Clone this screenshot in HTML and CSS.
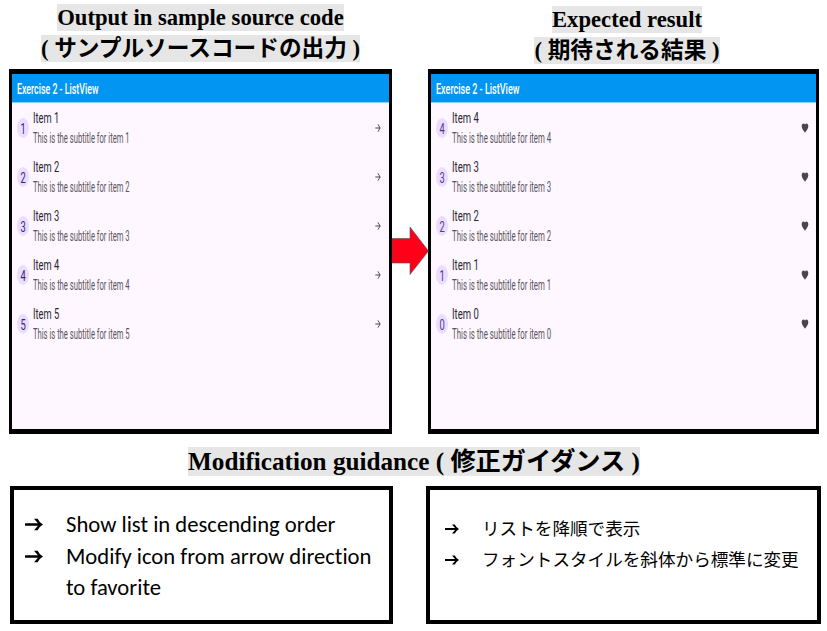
FILE: index.html
```html
<!DOCTYPE html>
<html lang="ja">
<head>
<meta charset="utf-8">
<title>Exercise 2 - ListView</title>
<link rel="stylesheet" href="styles.css">
</head>
<body>
<svg width="0" height="0" class="defs" aria-hidden="true">
  <symbol id="arrow" viewBox="0 0 24 24" preserveAspectRatio="none"><path d="M12 4l-1.4 1.4 5.6 5.6H4v2h12.200l-5.600 5.600L12 20l8-8z"/></symbol>
  <symbol id="heart" viewBox="0 0 24 24" preserveAspectRatio="none"><path d="M12 21.350l-1.450-1.320C5.400 15.360 2 12.280 2 8.500 2 5.420 4.420 3 7.500 3c1.740 0 3.410.810 4.500 2.090C13.090 3.810 14.760 3 16.500 3 19.580 3 22 5.420 22 8.500c0 3.780-3.400 6.860-8.550 11.540z"/></symbol>
  <symbol id="bullet" viewBox="0 0 17 12" preserveAspectRatio="none"><path d="M0 4.900h12.200L8.500 0.600h3.400Q13.600 4.200 17 6 13.600 7.800 11.900 11.400H8.500l3.700-4.300H0z"/></symbol>
</svg>
<main class="page">
  <section class="top">
    <h2 class="heading heading-left"><span class="mark">Output in sample source code</span><br><span class="mark">( サンプルソースコードの出力 )</span></h2>
    <h2 class="heading heading-right"><span class="mark">Expected result</span><br><span class="mark">( 期待される結果 )</span></h2>
    <div class="phone phone-left">
      <div class="bar"><span>Exercise 2 - ListView</span></div>
      <ul class="list">
        <li><b class="num"><i>1</i></b><div class="txt"><p class="t">Item 1</p><p class="s">This is the subtitle for item 1</p></div><svg class="ic arrow"><use href="#arrow"/></svg></li>
        <li><b class="num"><i>2</i></b><div class="txt"><p class="t">Item 2</p><p class="s">This is the subtitle for item 2</p></div><svg class="ic arrow"><use href="#arrow"/></svg></li>
        <li><b class="num"><i>3</i></b><div class="txt"><p class="t">Item 3</p><p class="s">This is the subtitle for item 3</p></div><svg class="ic arrow"><use href="#arrow"/></svg></li>
        <li><b class="num"><i>4</i></b><div class="txt"><p class="t">Item 4</p><p class="s">This is the subtitle for item 4</p></div><svg class="ic arrow"><use href="#arrow"/></svg></li>
        <li><b class="num"><i>5</i></b><div class="txt"><p class="t">Item 5</p><p class="s">This is the subtitle for item 5</p></div><svg class="ic arrow"><use href="#arrow"/></svg></li>
      </ul>
    </div>
    <svg class="flow" viewBox="0 0 38 50"><path d="M0 12.500H18V1L36.500 25 18 48.500V37H0z"/></svg>
    <div class="phone phone-right">
      <div class="bar"><span>Exercise 2 - ListView</span></div>
      <ul class="list">
        <li><b class="num"><i>4</i></b><div class="txt"><p class="t">Item 4</p><p class="s">This is the subtitle for item 4</p></div><svg class="ic heart"><use href="#heart"/></svg></li>
        <li><b class="num"><i>3</i></b><div class="txt"><p class="t">Item 3</p><p class="s">This is the subtitle for item 3</p></div><svg class="ic heart"><use href="#heart"/></svg></li>
        <li><b class="num"><i>2</i></b><div class="txt"><p class="t">Item 2</p><p class="s">This is the subtitle for item 2</p></div><svg class="ic heart"><use href="#heart"/></svg></li>
        <li><b class="num"><i>1</i></b><div class="txt"><p class="t">Item 1</p><p class="s">This is the subtitle for item 1</p></div><svg class="ic heart"><use href="#heart"/></svg></li>
        <li><b class="num"><i>0</i></b><div class="txt"><p class="t">Item 0</p><p class="s">This is the subtitle for item 0</p></div><svg class="ic heart"><use href="#heart"/></svg></li>
      </ul>
    </div>
  </section>
  <h1 class="title"><span class="mark">Modification guidance ( 修正ガイダンス )</span></h1>
  <section class="notes">
    <ul class="note note-en">
      <li><svg><use href="#bullet"/></svg><span>Show list in descending order</span></li>
      <li><svg><use href="#bullet"/></svg><span>Modify icon from arrow direction<br>to favorite</span></li>
    </ul>
    <ul class="note note-ja">
      <li><svg><use href="#bullet"/></svg><span>リストを降順で表示</span></li>
      <li><svg><use href="#bullet"/></svg><span>フォントスタイルを斜体から標準に変更</span></li>
    </ul>
  </section>
</main>
</body>
</html>
```
FILE: styles.css
```css
* { box-sizing: border-box; margin: 0; padding: 0; }
body { background: #fff; color: #000; overflow: hidden; }
ul { list-style: none; }
.defs { position: absolute; }
.page { width: 827px; height: 631px; display: flex; flex-direction: column; }

.top {
  display: grid;
  grid-template-columns: 383px 36px 391px;
  grid-template-rows: 69px 365px;
  padding-left: 9px;
  height: 434px;
}
.heading, .title {
  font-family: "Liberation Serif", "Noto Sans CJK JP", serif;
  font-weight: 700;
  text-align: center;
  white-space: nowrap;
}
.heading { font-size: 22.670px; line-height: 31px; }
.heading-left { grid-column: 1; padding-top: 2px; }
.heading-right { grid-column: 3; padding-top: 4px; padding-left: 7px; }
.mark { background: #e6e6e6; padding: 1px 0; }

.phone {
  grid-row: 2;
  background: #fef7ff;
  border: 3px solid #000;
  border-width: 5px 3px 5px 3px;
  font-family: Roboto, sans-serif;
}
.phone-left { grid-column: 1; }
.phone-right { grid-column: 3; }
.bar {
  height: 29px;
  padding-left: 5px;
  background: #0295f1;
  border-bottom: 1px solid #8fd0fa;
  color: #fff;
  font-size: 14px;
  font-weight: 500;
  line-height: 30px;
}
.bar span, .t, .s, .num i { display: block; width: max-content; transform-origin: 0 50%; white-space: nowrap; }
.bar span { transform: scaleX(.63); }
.phone-right .bar span { transform: scaleX(.645); }
.list li { display: flex; align-items: center; height: 49px; padding-left: 5px; }
.num {
  display: grid;
  place-items: center;
  width: 12px;
  height: 20px;
  border-radius: 50%;
  background: #eaddff;
  color: #4f378b;
  font-size: 15px;
  font-weight: 400;
}
.num i { font-style: normal; transform: scaleX(.62); transform-origin: 50% 50%; margin: 2px -2px 0; }
.phone-left .num { color: #3b1d75; }
.txt { flex: 1; padding: 1px 0 0 3.800px; }
.t { font-size: 15px; line-height: 20px; color: #2a2730; transform: scaleX(.62); }
.s { font-size: 14px; line-height: 20px; color: #5a5560; transform: scaleX(.545); }
.phone-right .t { transform: scaleX(.635); }
.phone-right .s { transform: scaleX(.56); }
.ic { fill: #49454f; }
.arrow { width: 8px; height: 12px; margin-right: 7px; }
.heart { width: 8px; height: 12px; margin-right: 7px; }
.flow { grid-column: 2; grid-row: 2; width: 38px; height: 50px; margin-top: 157px; fill: #ff0019; stroke: #44546a; stroke-width: .6; z-index: 1; }

.title { height: 52px; font-size: 25.200px; line-height: 55px; padding-left: 1px; }
.notes { display: flex; gap: 33px; padding-left: 10px; }
.note { height: 138px; border: 4px solid #000; }
.note li { display: flex; align-items: flex-start; white-space: nowrap; }
.note-en {
  width: 383px;
  padding: 19px 0 0 11px;
  font: 22.650px/31.500px Carlito, "Open Sans", sans-serif;
  font-variant-ligatures: none;
}
.note-en svg { width: 18px; height: 13px; margin: 9px 23px 0 0; flex: none; }
.note-ja {
  width: 395px;
  padding: 22px 0 0 15px;
  font: 17.600px/31px "Noto Sans CJK JP", sans-serif;
}
.note-ja svg { width: 14px; height: 10px; margin: 12px 23px 0 0; flex: none; }
```
